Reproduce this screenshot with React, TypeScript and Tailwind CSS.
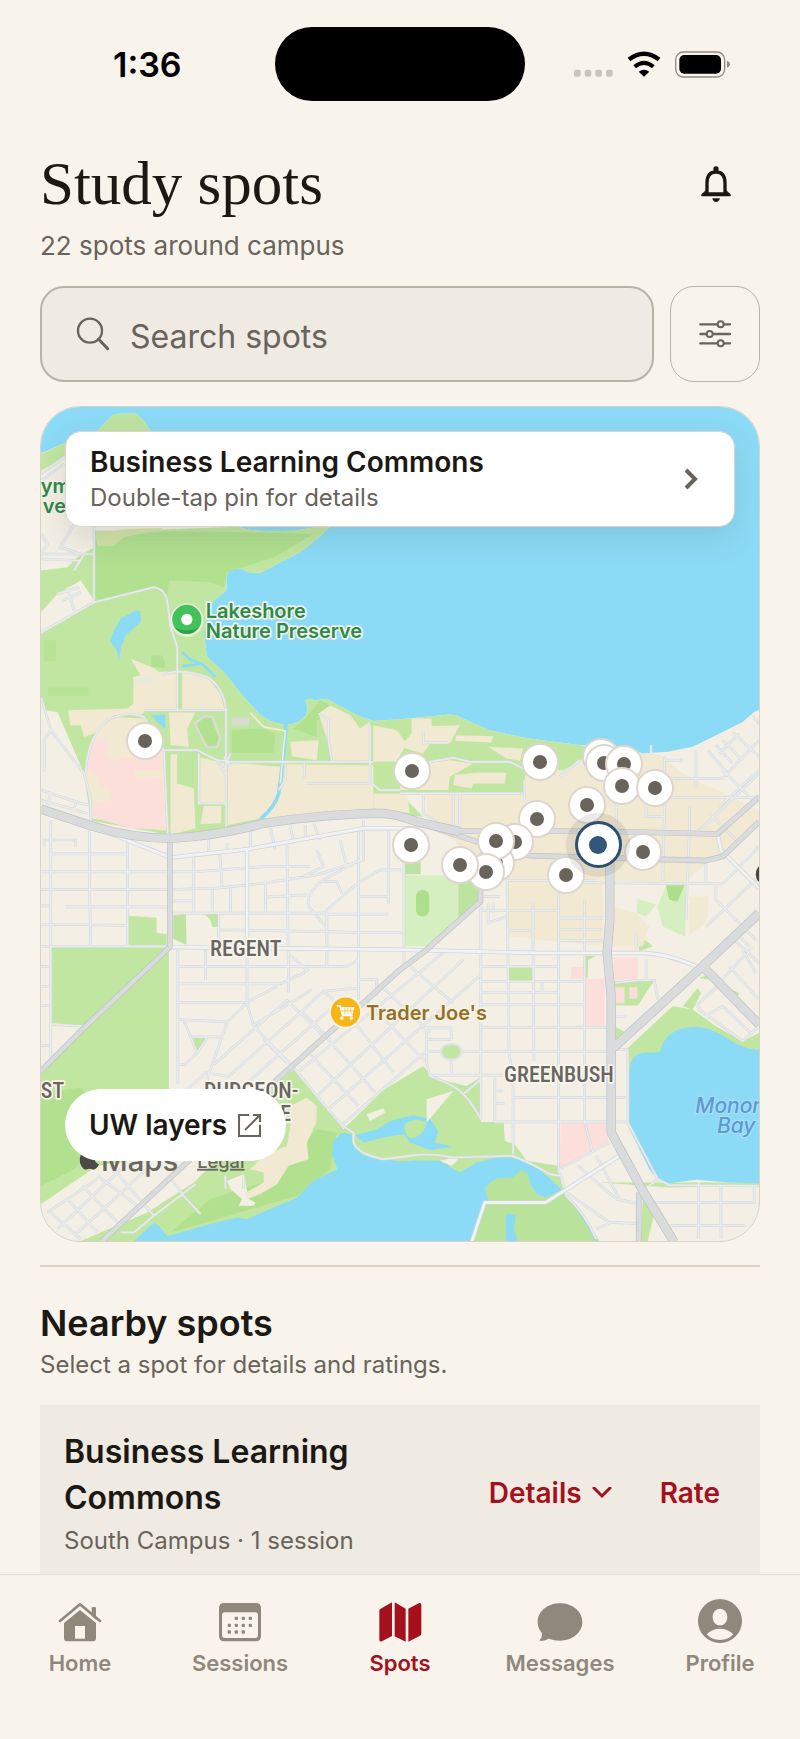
import { useState } from 'react';
import type { ReactNode } from 'react';

// Map artwork lives in its own units; pins use the same ones.
const MAP = { x: 30, y: 18, w: 2160, h: 2508 };

const PINS = [
    [344, 1021], [1145, 1112], [1532, 1087], [1715, 1071], [1723, 1088],
    [1784, 1092], [1779, 1158], [1878, 1163], [1673, 1214], [1522, 1257],
    [1142, 1334], [1456, 1326], [1399, 1388], [1398, 1322], [1370, 1415],
    [1290, 1395], [1609, 1425], [1841, 1356],
];

const SELECTED_PIN = [1706, 1334];

const TABS = ['Home', 'Sessions', 'Spots', 'Messages', 'Profile'];

export default function App() {
    const [query, setQuery] = useState('');
    const [tab, setTab] = useState('Spots');

    return (
        <div className="flex h-screen flex-col overflow-hidden bg-[#f8f4eb] font-['Inter',sans-serif] text-[#1c1914]">
            <StatusBar />

            <main className="min-h-0 flex-1 overflow-y-auto px-10 [scrollbar-width:none]">
                <header className="flex items-start justify-between pt-6">
                    <div>
                        <h1 className="font-['Liberation_Serif',serif] text-[61px] leading-16">Study spots</h1>
                        <p className="mt-3 text-[26px] leading-9 text-[#68635b]">22 spots around campus</p>
                    </div>
                    <button aria-label="Notifications" className="mt-1 flex size-14 items-center justify-center mr-4">
                        <BellIcon />
                    </button>
                </header>

                <div className="mt-[22px] flex gap-4">
                    <label className="flex h-24 min-w-0 flex-1 items-center gap-5 rounded-3xl border-2 border-[#b7b3a5] bg-[#efeae2] px-[34px]">
                        <SearchIcon />
                        <input
                            type="text"
                            aria-label="Search spots"
                            placeholder="Search spots"
                            value={query}
                            onChange={(e) => setQuery(e.target.value)}
                            className="w-full min-w-0 bg-transparent pt-1.5 text-[32px] outline-none placeholder:text-[#68635b]"
                        />
                    </label>
                    <button
                        aria-label="Filters"
                        className="flex h-24 w-[90px] items-center justify-center rounded-3xl border border-[#b7b3a5]"
                    >
                        <FilterIcon />
                    </button>
                </div>

                <SpotsMap />

                <hr className="mt-[23px] border-t-2 border-[#dad5c7]" />

                <section className="pt-[34px]">
                    <h2 className="text-[36px] leading-11 font-semibold">Nearby spots</h2>
                    <p className="mt-1 text-2xl leading-8 text-[#68635b]">Select a spot for details and ratings.</p>

                    <article className="mt-6 flex items-center justify-between bg-[#efeae2] p-6">
                        <div className="w-[330px]">
                            <h3 className="text-[32px] leading-[46px] font-semibold">Business Learning Commons</h3>
                            <p className="mt-1 text-2xl leading-8 text-[#68635b]">South Campus · 1 session</p>
                        </div>
                        <div className="flex items-center gap-12 pr-4 text-[28px] leading-9 font-semibold text-[#a5101d]">
                            <button className="flex items-center gap-2.5">
                                Details
                                <svg viewBox="0 0 20 12" className="h-3 w-5" fill="none" stroke="currentColor" strokeWidth="3">
                                    <path d="M2 1l8 8 8-8" strokeLinecap="round" />
                                </svg>
                            </button>
                            <button>Rate</button>
                        </div>
                    </article>
                </section>
            </main>

            <nav className="grid h-[165px] shrink-0 grid-cols-5 items-start border-t border-[#e0dccf] pt-6">
                {TABS.map((name) => (
                    <button
                        key={name}
                        onClick={() => setTab(name)}
                        className={`flex flex-col items-center gap-1 text-[22px] leading-8 font-semibold ${
                            tab === name ? 'text-[#a5101d]' : 'text-[#8f887d]'
                        }`}
                    >
                        <TabIcon name={name} />
                        {name}
                    </button>
                ))}
            </nav>
        </div>
    );
}

function StatusBar() {
    return (
        <div className="grid h-32 shrink-0 grid-cols-[1fr_250px_1fr] items-start pt-[27px] text-black">
            <div className="flex h-[74px] items-center pl-[113px] text-[34px] font-semibold">1:36</div>
            <div className="h-[74px] rounded-full bg-black" />
            <div className="flex h-[74px] items-center justify-end gap-3.5 pr-[70px]">
                <svg viewBox="101 94 117 80" className="h-[27px] w-[39px]" fill="#c8c5bf">
                    {[101, 133, 165, 197].map((x) => (
                        <rect key={x} x={x} y="150" width="20" height="21" rx="6" />
                    ))}
                </svg>
                <svg viewBox="260 94 102 80" className="h-[27px] w-[34px]" fill="none" stroke="#000">
                    <path d="M266 119Q311 84 356 119" strokeWidth="13" />
                    <path d="M283 141Q311 117 339 141" strokeWidth="12" />
                    <path d="M295 156Q311 143 327 156L311 171z" fill="#000" stroke="none" />
                </svg>
                <svg viewBox="405 94 165 81" className="h-[27px] w-[55px]">
                    <rect x="407" y="97" width="147" height="75" rx="23" fill="none" stroke="#8f8b80" strokeWidth="4" />
                    <rect x="418" y="106" width="125" height="56" rx="15" />
                    <path d="M561 123q9 4 9 11t-9 11z" fill="#8f8b80" />
                </svg>
            </div>
        </div>
    );
}

function SpotsMap() {
    return (
        <div className="relative mt-6 aspect-[720/836] overflow-hidden rounded-[40px] border border-[#d9d3c6]">
            <MapArtwork />

            {PINS.map(([x, y]) => (
                <Pin key={`${x}-${y}`} x={x} y={y}>
                    <span className="flex size-[38px] items-center justify-center rounded-full border-2 border-[#ddd6ce] bg-white">
                        <span className="size-3.5 rounded-full bg-[#68635b]" />
                    </span>
                </Pin>
            ))}
            <Pin x={SELECTED_PIN[0]} y={SELECTED_PIN[1]}>
                <span className="flex size-16 items-center justify-center rounded-full bg-[#7a6f62]/15">
                    <span className="flex size-[47px] items-center justify-center rounded-full border-3 border-[#2d5070] bg-white">
                        <span className="size-[18px] rounded-full bg-[#33567a]" />
                    </span>
                </span>
            </Pin>

            <button className="absolute inset-x-6 top-6 flex h-24 items-center justify-between rounded-2xl border border-[#ddd6ca] bg-white pr-9 pl-6 text-left shadow-[0_12px_32px_rgba(40,50,60,0.12)]">
                <span>
                    <span className="block text-[28px] leading-9 font-semibold">Business Learning Commons</span>
                    <span className="block pt-0.5 text-2xl leading-8 text-[#68635b]">Double-tap pin for details</span>
                </span>
                <svg viewBox="0 0 14 22" className="h-[22px] w-3.5" fill="none" stroke="#68635b" strokeWidth="4">
                    <path d="M2 2l9 9-9 9" />
                </svg>
            </button>

            <button className="absolute bottom-20 left-6 flex h-[72px] items-center gap-2.5 rounded-full bg-white px-6 text-[28px] font-semibold">
                UW layers
                <svg viewBox="619 877 74 74" className="size-[25px]" fill="none" stroke="#68635b" strokeWidth="6">
                    <path d="M655 883H625V945H687V912M643 927L687 883M666 883H687V904" />
                </svg>
            </button>
        </div>
    );
}

function Pin({ x, y, children }: { x: number; y: number; children: ReactNode }) {
    return (
        <button
            aria-label="Study spot"
            className="absolute -translate-x-1/2 -translate-y-1/2"
            style={{ left: `${((x - MAP.x) / MAP.w) * 100}%`, top: `${((y - MAP.y) / MAP.h) * 100}%` }}
        >
            {children}
        </button>
    );
}

const GREEN = '#c0e6a1';
const GREEN_DARK = '#acdf8a';
const WATER = '#8cdbf6';
const CAMPUS = '#f2e9d3';
const PINK = '#fcdfdb';

const CAMPUS_AREAS = [
    '300,775 370,803 385,815 440,812 440,930 345,930 330,945 250,945 190,1000 160,1010 150,975 118,975 112,930 290,925 308,910 308,830 330,825',
    '455,815 530,830 570,880 583,930 455,930',
    '200,990 250,950 340,955 400,1050 408,1292 180,1255 165,1120 175,1040',
    '415,937 495,937 470,985 475,1040 420,1035',
    '420,1062 440,1062 440,1150 490,1165 495,1285 420,1305',
    '510,1072 585,1090 585,1208 507,1208',
    '520,1218 572,1218 572,1270 510,1272',
    '592,1090 640,1090 750,1100 740,1200 690,1255 592,1275',
    '770,1092 1030,1095 1030,1225 800,1245 700,1260 745,1190',
    '780,1025 865,1020 860,1080 785,1068',
    '865,940 900,915 960,945 990,985 1018,965 1022,1085 905,1085 895,1030',
    '1030,975 1100,990 1130,1030 1100,1085 1030,1085',
    '1145,955 1205,955 1205,978 1290,975 1260,1030 1200,1030 1180,1060 1110,1040 1145,1000',
    '1280,1005 1390,1008 1385,1027 1275,1022',
    '1375,1040 1480,1045 1470,1082 1430,1075',
    '1110,1100 1260,1080 1330,1090 1260,1130 1255,1170 1110,1170',
    '1275,1125 1340,1118 1430,1118 1425,1150 1330,1150 1325,1165 1270,1155',
    '1030,1180 1130,1180 1140,1240 1030,1225',
    '1185,1183 1480,1180 1490,1100 1600,1110 1640,1090 1680,1060 1890,1062 1960,1120 2190,1230 2190,1260 1960,1450 1720,1440 1720,1640 1430,1610 1430,1440 1360,1400 1200,1260',
    '1750,1520 1820,1540 1860,1580 1840,1640 1750,1640',
    '1980,1490 2040,1490 2030,1570 1980,1605',
    '1850,2410 1890,2420 1945,2520 1920,2520',
];

const PARKS = [
    '290,1548 378,1554 378,1600 408,1603 408,1636 290,1636',
    '518,1540 563,1540 563,1582 545,1582 540,1560',
    '62,1642 415,1642 415,2080 520,2080 520,2250 200,2300 30,2415 30,2015 160,1880 62,1870',
    '485,1912 530,1912 498,1960',
    '490,2350 600,2240 740,2050 790,2010 860,2095 940,2190 1060,2072 1180,2000 1210,2035 1310,2060 1350,2035 1353,2168 1422,2168 1425,2225 1455,2235 1490,2285 1585,2300 1610,2380 1710,2526 150,2526 350,2440',
    '1432,1705 1510,1705 1510,1742 1432,1742',
    '1640,1480 1720,1495 1720,1550 1706,1550 1700,1510 1640,1500',
    '1755,1745 1875,1742 1825,1818 1755,1818',
    '1668,1668 1700,1668 1676,1680 1674,1735 1668,1735',
    '1755,1880 1790,1900 1760,1930',
    '1790,1950 1930,1820 1990,1830 2060,1880 2140,1925 2190,1900 2190,1980 1798,2190 1795,1960',
    '1960,1820 2005,1765 2015,1780 1990,1830',
    '2010,1735 2040,1740 2130,1780 2125,1790 2050,1720',
    '1840,2395 1875,2440 1855,2526 1835,2526',
    '30,160 105,125 105,165 30,210',
    '30,510 110,500 140,470 190,440 190,600 150,540 80,580 30,635',
    '1710,2350 2190,2350 2190,2360 1920,2365',
    '1600,1190 1640,1190 1640,1280 1600,1240',
    '1820,1600 1870,1640 1830,1655',
];

const DARK_PARKS = [
    '190,420 310,400 420,392 640,395 850,400 730,470 590,515 580,560 540,545 415,540 410,590 370,562 190,600',
    '200,90 245,42 265,38 315,36 340,60 370,110 190,110',
    '428,1547 466,1543 468,1635 428,1618',
    '362,765 395,765 405,790 400,802 362,798',
    '603,990 700,985 735,1000 730,1058 603,1058',
    '500,960 520,948 545,955 565,1010 558,1035 530,1040 505,1005',
    '790,985 830,950 870,900 930,930 860,960 860,1010',
    '30,2080 150,2065 200,2120 200,2230 130,2310 30,2360',
    '700,2350 860,2190 920,2200 900,2310 800,2390 560,2460 420,2500 540,2400',
    '1285,1427 1350,1427 1350,1500 1285,1555',
    '1125,1385 1172,1385 1172,1423 1125,1423',
    '1910,1456 1965,1456 1945,1505 1920,1500',
];

// local streets, drawn as one stroked path
const STREETS = [
    'M190 380V605L370 560Q402 565 410 600L420 680L440 740V930M190 605L30 697',
    'M395 825Q440 800 530 830Q580 860 587 930V1300M340 930H587M30 890L60 990L160 1120L180 1200V1270',
    'M165 1120Q170 1010 230 960Q290 930 340 950L400 1050L412 1310M400 1050H500L560 1080L600 1085H1030',
    'M505 1060V1210H585M1020 975V1145L1050 1170H1110M830 1150H1020M865 940L895 960V1020L905 1085M765 1090V1140L745 1170M822 1090V1135',
    'M30 460H190M30 475L150 480M80 580L145 560M95 600L150 575M110 560L130 630M30 400L50 430L30 460M90 440L150 460M85 445L130 370M160 460L130 510M105 165L30 220M30 240L100 190',
    'M580 1070L600 1100M600 1060L580 1110M560 1080L590 1130',
    'M60 990L40 1020V1115M30 1170L150 1210L175 1215M30 1200L170 1240M60 1175L50 1215M135 1210L125 1235',
    'M60 1260V1990M177 1275V1500L180 1640M291 1330V1640M490 1370V1540M525 1640V1740M568 1360L575 1460M565 1540V1640M600 1465V1540M545 1465V1540M705 1450V1540',
    'M40 1340V1320H135V1340M60 1362H291M30 1416H490L700 1400L840 1400M30 1469H420L560 1465L700 1450L860 1425L1000 1380V1290M105 1521H410M30 1575H177L290 1577M30 1640H418M30 1518H60M30 1700H60M30 1760H60M30 1818H60M62 1875L160 1880M30 1938H60',
    'M420 1503H490M420 1540H885M885 1543H1075M705 1492L830 1485M568 1590L985 1598H1120M440 1700H880L950 1700L985 1680M440 1753H750L820 1720L835 1705M440 1808H650L740 1760M440 1860L590 1867M440 1995H465L500 1960L530 1915M460 1862L500 1960M485 1912H570',
    'M442 1645V2052M650 1350V1810L590 1867L530 2040M650 1810L670 1880L795 2010M770 1320L775 1780M770 1660L835 1715M890 1540V1700M985 1290V1800M1075 1290V1510M1122 1345V1690M985 1490H1075M985 1450L1050 1410H1120M985 1740H1040V1790M890 1585L835 1520Q825 1480 880 1440L990 1380M880 1540L985 1448M880 1445H920L935 1480',
    'M535 1300V1355M590 1330V1355M660 1290V1340M720 1280L735 1350M780 1275L790 1330M825 1275V1320M850 1270L870 1320M1000 1260V1285M860 1350L880 1400L820 1430M930 1320L950 1400',
    'M470 2070L525 2020L590 2030M550 1995L770 1802L880 1910M590 2035L815 1835L880 1775L985 1765M640 2060L910 1820M665 1880L845 1770M810 1832L900 1920M880 1775L965 1850M700 1920L770 1990',
    'M840 1965L985 2120M890 1915L1035 2080M960 1850L1090 2020M1010 1805L1185 1985M1060 1765L1200 1900M1140 1700L1270 1810M860 2090L1300 1680M895 2130L1353 1725M935 2178L1190 1955M800 2020L1240 1660M795 2010L860 2090L935 2178L970 2200',
    'M1190 1885H1264V1920M1190 1920H1264M1190 1880V1990L1200 2030L1250 2050Q1310 2075 1353 2160M1295 1957H1730M1190 1957H1235M1264 1980V2025M1200 2027H1735M1300 2085L1353 2040',
    'M1353 1480V2160M1432 1440L1438 1960L1450 2030V2265M1510 1510V1660L1513 1985M1587 1480V2320M1665 1500V2170L1690 2260M1353 1533H1587M1432 1592H1510M1587 1555H1720M1587 1590H1720M1587 1622H1720M1353 1700H1587M1353 1745H1665M1353 1778H1587M1537 1745V1778M1353 1814H1665M1353 1884H1730M1395 2035V2168H1790M1450 2095H1795M1395 2075H1420M1395 2112H1425',
    'M1432 1442H1700M1600 1448L2080 1452L2190 1340M1353 1490H1410M1375 1510V1570L1430 1550M1390 1510V1540',
    'M1180 995V1028H1255M1110 1105L1170 1090L1270 1073L1320 1085H1440L1490 1110M1180 1180V1240L1220 1265M1110 1180H1480M1290 1180V1290M1270 1180V1290M1484 1140V1200M1590 1130L1650 1080M1760 1150V1300M1865 1035V1060M1905 1070V1240L1900 1450M1905 1080H1960M1920 1135H2080L2190 1020M1860 1193H2190M2000 1050V1160M1850 1220V1250H1905M1980 1220V1300L1970 1560',
    'M2035 1050L2095 1120M2060 1035L2110 1090M2080 1020L2140 1080M2110 995L2190 1070M2070 1060L2130 1000M2170 945L2190 970M2080 1110L2180 1210M2070 1220L2190 1110M2000 1300L2190 1120M2040 1240L2130 1330',
    'M2030 1382V1450M2060 1460V1500L2180 1620M2030 1580L2190 1430M2115 1620L2190 1690M2080 1740L2170 1640M2120 1600L2160 1640M2100 1700L2190 1800M2140 1650L2180 1720M1820 1600V1650M1850 1680V1740M1755 1750L1830 1742H1875L1885 1800M1755 1850H1790',
    'M2000 1820L2080 1745M2000 1810L2010 1830L2140 1925L2190 1880M2030 1850L2080 1820L2170 1905M1760 1950H1795V2170L1885 2340L1860 2360M1885 2340L1920 2358L2190 2360M2008 2350V2520M2075 2360V2520M2175 2360V2410H1860M1920 2480H2150',
    'M1590 2320L1610 2390Q1670 2450 1700 2520M1590 2310L1740 2230M1645 2300L1760 2400L1820 2412M1700 2270L1770 2400M1610 2380L1740 2470L1820 2473M1700 2490L1745 2470',
    'M110 2400L200 2500M155 2360L270 2480M200 2330L320 2420M240 2300L370 2450M60 2440L150 2520M50 2440L200 2340M80 2490L270 2310M130 2510L360 2300M270 2500H310L370 2450L495 2355M450 2380L510 2445M415 2330L460 2390M640 2330V2370M585 2330V2370',
    'M970 2200V2230Q985 2265 1060 2280L1140 2270Q1200 2260 1270 2275L1450 2270Q1520 2300 1560 2325L1590 2330',
];

function MapArtwork() {
    return (
        <svg
            viewBox={`${MAP.x} ${MAP.y} ${MAP.w} ${MAP.h}`}
            preserveAspectRatio="xMidYMid slice"
            className="absolute inset-0 size-full"
            role="img"
            aria-label="Map of campus study spots"
        >
            <rect x="0" y="0" width="2220" height="2560" fill={WATER} />
            <path
                d="M30 158L105 125L200 90L245 42L265 38L315 36L340 60L360 92L450 250L620 378L660 388L720 392L790 390L850 380L900 378L860 415L810 455L740 490L690 517L655 515L630 503L595 508L588 530V570L550 600L528 635L520 700L530 770L580 815L640 890L690 945L720 962L765 975L800 968L828 945L832 920L825 900L835 895L858 900L890 895L920 912L980 945L1030 962L1110 957L1260 943L1280 945L1310 960L1380 990L1480 1012L1550 1022L1640 1034L1780 1040L1840 1060L1915 1055L1990 1040L2060 1005L2140 965L2175 935L2190 928V2540H0V158z"
                fill="#f3efe4"
            />
            <path
                d="M190 390H300L620 378L660 388L720 392L790 390L850 380L900 378L860 415L810 455L740 490L690 517L655 515L630 503L595 508L588 530V570L550 600L528 635L520 700L530 770L580 815L640 890L690 945L720 962L765 975L800 968L828 945L832 920L825 900L835 895L858 900L890 895L920 912L980 945L1030 962L1110 957L1260 943L1280 945L1310 960L1380 990L1480 1012L1550 1022L1640 1034L1690 1040L1640 1100L1590 1200H1480L1440 1180L1110 1180L1180 1250L1030 1240L700 1262L590 1290L420 1305L180 1262L160 1120L80 935L40 930L30 890V697L190 607z"
                fill={GREEN}
            />
            <g fill={GREEN}>{PARKS.map((p) => <polygon key={p} points={p} />)}</g>
            <g fill={GREEN_DARK} opacity="0.75">{DARK_PARKS.map((p) => <polygon key={p} points={p} />)}</g>
            <g fill={CAMPUS}>{CAMPUS_AREAS.map((p) => <polygon key={p} points={p} />)}</g>

            {/* athletic fields and squares */}
            <g fill="#d6efc0">
                <polygon points="1125,1427 1285,1427 1285,1560 1190,1640 1125,1640" />
                <polygon points="1910,1456 1970,1456 1968,1612 1900,1580 1885,1520" />
                <polygon points="1825,1497 1880,1515 1850,1550 1822,1540" />
            </g>
            <g fill={GREEN_DARK}>
                <rect x="1158" y="1470" width="40" height="80" rx="20" />
                <polygon points="1910,1456 1965,1456 1945,1505 1920,1500" />
                <rect x="40" y="720" width="35" height="62" opacity="0.5" />
                <rect x="52" y="862" width="120" height="24" opacity="0.5" />
            </g>
            <rect x="312" y="832" width="62" height="20" fill="#e9ebd9" />
            <rect x="604" y="952" width="52" height="24" fill="#d9dcd3" />
            <polygon points="195,395 300,385 395,382 380,390 280,410 250,435 200,435" fill="#d2e3a6" />
            <polygon points="492,970 522,948 545,950 570,1015 560,1040 530,1042" fill="none" stroke="#dcdcd4" strokeWidth="7" />

            {/* hospitals */}
            <g fill={PINK}>
                <polygon points="195,1015 222,1022 235,1040 220,1060 245,1080 300,1070 345,1060 395,1070 395,1110 312,1112 310,1130 398,1132 402,1290 300,1285 180,1250 190,1210 240,1200 240,1170 205,1155 205,1135 170,1110 178,1040" />
                <rect x="1753" y="1673" width="72" height="67" />
                <rect x="1624" y="1702" width="37" height="36" />
                <rect x="1667" y="1737" width="58" height="142" />
                <rect x="1757" y="1763" width="28" height="48" />
                <rect x="1800" y="1763" width="24" height="34" />
                <polygon points="1593,2172 1730,2172 1737,2228 1590,2312" />
            </g>

            {/* lake Wingra */}
            <path
                d="M310 2526L370 2470L385 2480L410 2512L540 2475L620 2455L650 2460L730 2425L800 2395L850 2345L880 2330L922 2310L905 2265L910 2225L935 2200L965 2205L975 2240L1000 2270L1110 2287L1170 2283L1230 2285L1290 2320L1340 2290L1420 2270L1480 2285L1530 2310L1590 2365L1640 2430L1680 2480L1705 2526z"
                fill={WATER}
            />
            <path
                d="M1365 2370L1375 2355L1400 2338L1450 2335L1475 2310L1495 2325L1500 2350L1520 2385L1550 2395L1590 2375Q1650 2430 1705 2540H1470L1452 2490L1458 2450L1440 2442L1428 2450V2540H1325L1375 2405z"
                fill="#b9e29b"
            />
            <path d="M590 2345L640 2325L655 2400L675 2410L670 2420H625L635 2400L600 2370z" fill="#f3efe4" />
            <path
                d="M780 2120L830 2095L860 2120L858 2170L830 2230L835 2280L775 2300L740 2355L690 2385L655 2398L640 2385L700 2350L700 2320L660 2310L700 2270L770 2240L780 2180z"
                fill={CAMPUS}
            />
            <path d="M1010 2145L1060 2127L1065 2140L1020 2165z" fill="#f3efe4" />
            <path d="M975 2208L1040 2190L1080 2165L1150 2148L1200 2158L1225 2195L1215 2230L1270 2243L1200 2252L1140 2230L1120 2205L1060 2215L1000 2230z" fill={WATER} />
            <path d="M1125 2175Q1160 2150 1190 2170Q1180 2215 1140 2217Q1118 2200 1125 2175z" fill={GREEN} />
            <path d="M1190 2170L1270 2075L1190 2100z" fill="#f3efe4" />
            <path d="M1230 2285L1270 2275L1285 2280L1265 2300z" fill="#f3efe4" />

            {/* Monona bay */}
            <path
                d="M1800 2010Q1805 1960 1850 1960L1892 1958Q1905 1885 2000 1882Q2050 1885 2100 1920Q2140 1948 2190 1952V2352L2100 2350L2000 2342L1920 2352Q1880 2345 1860 2310L1800 2190z"
                fill={WATER}
            />
            <path d="M315 630L330 632V665L285 705L270 745L265 785L258 750L238 720L250 690L270 655z" fill={WATER} />
            <path d="M362 945L404 943V985L385 970z" fill={WATER} />
            <path d="M455 755L480 778L515 790L555 830M455 798L510 790" fill="none" stroke={WATER} strokeWidth="8" />
            <path d="M767 972L762 1050L745 1180Q735 1220 692 1255" fill="none" stroke={WATER} strokeWidth="11" />
            <path d="M660 938L700 980L765 992L750 1150" fill="none" stroke="#f2ecd8" strokeWidth="5" />

            <g fill="none" strokeLinejoin="round">
                <path d={STREETS.join('')} stroke="#d3d7da" strokeWidth="8" />
                <path d={STREETS.join('')} stroke="#e8ebec" strokeWidth="5" />
                <ellipse cx="1264" cy="1957" rx="31" ry="24" fill={GREEN} stroke="#dfe3e4" strokeWidth="7" />
                <Road
                    d="M200 1285L420 1373L650 1348L1000 1285H1140M418 1642L1110 1650L1530 1660H1850Q1920 1665 2000 1700M650 1350V1640M1325 2530L1365 2410H1548L1770 2270M2065 1302L2075 1350L2190 1465"
                    casing="#cfd3d6"
                    fill="#f0f2f3"
                    width={13}
                />
                <Road
                    d="M418 1315V1642L160 1885L30 2015M1352 1450V1505L1190 1650L1110 1710L1000 1810L880 1915L730 2050L420 2335L210 2530M1828 2380V2530M1280 1293H1700L2065 1302L2190 1190M1110 1250L1340 1325L1500 1367L2030 1382L2080 1370L2190 1265"
                    casing="#bfc2c5"
                    fill="#d9dbdd"
                    width={17}
                />
                <Road
                    d="M30 1227L180 1277Q300 1315 420 1315Q560 1308 700 1270Q900 1240 1060 1240Q1110 1245 1160 1265L1290 1295M1741 1300V1560L1733 1660L1745 1790V2200L1840 2375L1935 2530M1752 1945L2020 1700L2190 1540M2020 1700L2190 1875"
                    casing="#bfc2c5"
                    fill="#d9dbdd"
                    width={28}
                />
            </g>

            {/* place names */}
            <g
                className="stroke-[#f4f1e8] font-semibold [paint-order:stroke]"
                strokeWidth="10"
                strokeLinejoin="round"
                fill="#2c8a4b"
                fontSize="60"
            >
                <text x="526" y="652">Lakeshore</text>
                <text x="526" y="713">Nature Preserve</text>
                <text x="30" y="277">ym</text>
                <text x="36" y="338">ve</text>
                <text x="1008" y="1860" fill="#94701f">Trader Joe's</text>
            </g>
            <g
                className="stroke-[#f8f6ef] font-['Roboto_Condensed','Liberation_Sans_Narrow','Roboto',sans-serif] font-medium [paint-order:stroke]"
                strokeWidth="10"
                strokeLinejoin="round"
                fill="#6a665f"
                fontSize="66"
            >
                <text x="539" y="1669">REGENT</text>
                <text x="1423" y="2049">GREENBUSH</text>
                <text x="30" y="2097">ST</text>
                <text x="663" y="2097" textAnchor="middle">DUDGEON-</text>
                <text x="663" y="2166" textAnchor="middle">MONROE</text>
            </g>
            <g className="stroke-[#a9dff5] font-medium italic [paint-order:stroke]" strokeWidth="7" fill="#5a9bd3" fontSize="63">
                <text x="1998" y="2140">Monona</text>
                <text x="2063" y="2202">Bay</text>
            </g>

            {/* nature preserve badge */}
            <circle cx="469" cy="659" r="50" fill="#e9f0df" />
            <circle cx="469" cy="657" r="44" fill="#43c15b" />
            <path d="M433 682A44 44 0 0 0 505 682Q469 698 433 682z" fill="#2fa348" />
            <circle cx="469" cy="657" r="17" fill="#fff" />

            {/* grocery badge */}
            <circle cx="946" cy="1838" r="50" fill="#f7f3e9" />
            <circle cx="946" cy="1838" r="44" fill="#f8b517" />
            <path d="M920 1819H930L937 1848H968" fill="none" stroke="#fff" strokeWidth="5" />
            <path d="M929 1822H973L966 1846H936z" fill="#fff" />
            <path d="M944 1824V1844M953 1824V1844M962 1824V1844M932 1834H970" stroke="#f8b517" strokeWidth="2" />
            <circle cx="935" cy="1856" r="5" fill="#fff" />
            <circle cx="964" cy="1856" r="5" fill="#fff" />

            <circle cx="2214" cy="1423" r="34" fill="#4a4742" />

            {/* map attribution */}
            <path d="M162 2256Q169 2256 175 2260Q188 2253 200 2262Q191 2270 192 2282Q194 2292 205 2295Q196 2313 186 2311Q176 2306 167 2311Q156 2313 148 2292Q143 2262 162 2256z" fill="#4d4a45" />
            <g fill="#6a665f">
                <text x="211" y="2315" fontSize="88" className="font-medium">Maps</text>
                <text x="500" y="2306" fontSize="55" className="font-medium underline">Legal</text>
            </g>
        </svg>
    );
}

function Road({ d, casing, fill, width }: { d: string; casing: string; fill: string; width: number }) {
    return (
        <>
            <path d={d} stroke={casing} strokeWidth={width} />
            <path d={d} stroke={fill} strokeWidth={width - 4} />
        </>
    );
}

function SearchIcon() {
    return (
        <svg viewBox="140 892 102 102" className="size-[34px] shrink-0" fill="none" stroke="#68635b">
            <circle cx="182" cy="933" r="36" strokeWidth="7" />
            <path d="M208 959L235 987" strokeWidth="9" strokeLinecap="round" />
        </svg>
    );
}

function FilterIcon() {
    return (
        <svg viewBox="477 895 96 96" className="size-8" stroke="#68635b" strokeLinecap="round">
            <path d="M481 914H570M481 943H570M481 971H570" strokeWidth="7" />
            <g fill="#f8f4eb" strokeWidth="6">
                <circle cx="542" cy="914" r="9" />
                <circle cx="509" cy="943" r="9" />
                <circle cx="542" cy="971" r="9" />
            </g>
        </svg>
    );
}

function BellIcon() {
    return (
        <svg viewBox="475 437 108 108" className="size-9" fill="#1c1914">
            <path d="M502 520V488Q502 455 529 455Q556 455 556 488V520" fill="none" stroke="#1c1914" strokeWidth="10" />
            <circle cx="529" cy="446" r="8" />
            <path d="M485 528V522L500 508V516H558V508L573 522V528z" />
            <path d="M518 534H541Q538 545 529 545Q520 545 518 534z" />
        </svg>
    );
}

function TabIcon({ name }: { name: string }) {
    switch (name) {
        case 'Home':
            return (
                <svg viewBox="174 117 132 132" className="size-11" fill="currentColor">
                    <path d="M180 183L240 133L300 183" fill="none" stroke="currentColor" strokeWidth="8" strokeLinecap="round" strokeLinejoin="round" />
                    <path d="M275 168V145q0-4 4-4h5q4 0 4 4v34z" />
                    <path fillRule="evenodd" d="M192 189L240 150L288 189V235q0 9-9 9H201q-9 0-9-9zM225 198V236H255V198z" />
                </svg>
            );
        case 'Sessions':
            return (
                <svg viewBox="654 117 132 132" className="size-11" fill="currentColor">
                    <path
                        fillRule="evenodd"
                        d="M673 129H767q16 0 16 16V228q0 16-16 16H673q-16 0-16-16V145q0-16 16-16zM675 157q-9 0-9 9V225q0 9 9 9H765q9 0 9-9V166q0-9-9-9z"
                    />
                    {[[709, 175], [730, 175], [751, 175], [688, 196], [709, 196], [730, 196], [751, 196], [688, 216], [709, 216], [730, 216]].map(([x, y]) => (
                        <rect key={`${x}-${y}`} x={x - 5} y={y - 5} width="10" height="10" rx="3" />
                    ))}
                </svg>
            );
        case 'Spots':
            return (
                <svg viewBox="1134 117 132 132" className="size-11" fill="currentColor">
                    <path d="M1138 152q0-4 4-6L1176 127V228L1146 244q-8 3-8-5z" />
                    <path d="M1184 127L1217 146V245L1184 229z" />
                    <path d="M1225 146L1256 130q8-3 8 5V221q0 4-4 6L1225 245z" />
                </svg>
            );
        case 'Messages':
            return (
                <svg viewBox="417 117 132 132" className="size-11 overflow-visible" fill="currentColor">
                    <path d="M483 130C520 130 550 154 550 186S520 242 483 242Q466 242 449 236Q437 243 426 243Q420 242 424 238Q430 231 429 220Q416 205 416 186C416 154 446 130 483 130z" />
                </svg>
            );
        default:
            return (
                <svg viewBox="895 120 132 132" className="size-11" fill="currentColor">
                    <path
                        fillRule="evenodd"
                        d="M961 120A66 66 0 1 1 961 252A66 66 0 1 1 961 120zM961 149C948 149 939 160 939 174S948 199 961 199S983 188 983 174S974 149 961 149zM921 226Q936 243 961 243T1001 226Q985 209 961 209T921 226z"
                    />
                </svg>
            );
    }
}
